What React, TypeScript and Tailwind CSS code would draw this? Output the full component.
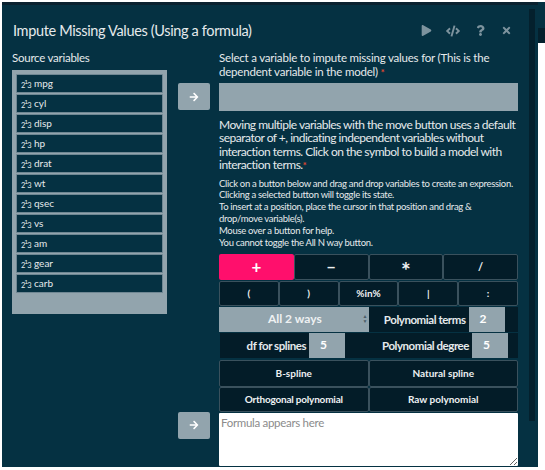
import { FaArrowRight, FaCode, FaPlay, FaQuestion, FaTimes } from "react-icons/fa"

const variables = ["mpg", "cyl", "disp", "hp", "drat", "wt", "qsec", "vs", "am", "gear", "carb"]

const font = { fontFamily: 'Lato, sans-serif' }

function NumericIcon() {
  return (
    <span className="flex h-[12px] w-[11px] shrink-0 items-end text-[7.5px] leading-[8px] text-[#e6eaec]">
      <span>2</span>
      <span className="mb-[4px] ml-[-1px] text-[6.5px]">1</span>
      <span className="ml-[-1px]">3</span>
    </span>
  )
}

function MoveButton() {
  return (
    <button className="flex h-[27px] w-[32px] items-center justify-center rounded-[2px] bg-[#92a4ad] text-white">
      <FaArrowRight className="size-[10px]" />
    </button>
  )
}

function OpButton({ label, className = "" }: { label: string; className?: string }) {
  return (
    <button className={`flex items-center justify-center rounded-[2px] border border-[#3a515d] bg-[#031c28] font-bold leading-none text-[#eef1f2] ${className}`}>
      {label}
    </button>
  )
}

function NumberField({ label, value, labelWidth }: { label: string; value: string; labelWidth: string }) {
  return (
    <div className="flex h-[25px] items-center bg-[#031c28]">
      <span className={`shrink-0 whitespace-nowrap text-right text-[11.5px] font-bold tracking-[-0.45px] text-[#e6eaec] ${labelWidth}`}>{label}</span>
      <span className="ml-[3px] flex h-[25px] w-[36px] items-center bg-[#92a4ad] pl-[11px] text-[12px] font-bold text-white">{value}</span>
    </div>
  )
}

export default function App() {
  return (
    <div className="h-[470px] w-[545px] overflow-hidden bg-white" style={font}>
      <div className="ml-[2px] flex h-[467px] w-[543px] pt-[2px]">
        <div className="flex h-full w-[536px] border-t-[3px] border-[#0b2230] bg-[#053142]">
          <div className="flex w-[526px] shrink-0 flex-col">
            <div className="flex h-[41px] shrink-0 items-center pl-[11px] pr-[16px] pt-[10px]">
              <h1 className="flex-1 whitespace-nowrap text-[14.5px] font-normal tracking-[-0.35px] text-[#e6eaec]">Impute Missing Values (Using a formula)</h1>
              <div className="flex items-center text-[#7d939e]">
                <FaPlay className="size-[11px]" />
                <FaCode className="ml-[14px] size-[14px]" />
                <FaQuestion className="ml-[15px] size-[11px]" />
                <FaTimes className="ml-[15px] size-[11px]" />
              </div>
            </div>

            <div className="flex pl-[10px]">
              <div className="w-[155px] shrink-0 pt-[3px]">
                <div className="text-[11.5px] leading-[17px] tracking-[-0.25px] text-[#e6eaec]">Source variables</div>
                <div className="mt-[4px] flex h-[244px] flex-col gap-[1px] bg-[#92a4ad] p-[4px]">
                  {variables.map((name) => (
                    <div key={name} className="flex h-[19px] items-center gap-[2px] rounded-[1px] border border-[#6f8793] bg-[#053142] pl-[4px] text-[10px] text-[#e6eaec]">
                      <NumericIcon />
                      {name}
                    </div>
                  ))}
                </div>
              </div>

              <div className="ml-[11px] mr-[9px] mt-[37px] flex w-[32px] shrink-0 flex-col justify-between pb-[27px]">
                <MoveButton />
                <MoveButton />
              </div>

              <div className="w-[299px] shrink-0 pt-[5px]">
                <div className="text-[11.5px] leading-[13.5px] tracking-[-0.2px] text-[#e6eaec]">
                  Select a variable to impute missing values for (This is the<br />dependent variable in the model) <span className="text-[9px] font-bold leading-[0] text-[#e8482f]">*</span>
                </div>
                <div className="mt-[5px] h-[28px] bg-[#92a4ad]" />
                <div className="mt-[7px] text-[12px] leading-[13.4px] tracking-[-0.5px] text-[#e6eaec]">
                  Moving multiple variables with the move button uses a default separator of +, indicating independent variables without interaction terms. Click on the symbol to build a model with interaction terms.<span className="text-[9px] font-bold leading-[0] text-[#e8482f]">*</span>
                </div>
                <div className="mt-[6px] text-[9.5px] leading-[11.85px] tracking-[-0.3px] text-[#e6eaec]">
                  <div>Click on a button below and drag and drop variables to create an expression.</div>
                  <div>Clicking a selected button will toggle its state.</div>
                  <div>To insert at a position, place the cursor in that position and drag &amp;<br />drop/move variable(s).</div>
                  <div>Mouse over a button for help.</div>
                  <div>You cannot toggle the All N way button.</div>
                </div>

                <div className="mt-[5px] grid h-[26px] grid-cols-4 grid-rows-[26px]">
                  <button className="flex items-center justify-center rounded-[2px] bg-[#ff0f6c] text-[17px] font-bold leading-none text-white">+</button>
                  <OpButton label="−" className="text-[16px]" />
                  <OpButton label="*" className="pt-[8px] text-[23px]" />
                  <OpButton label="/" className="text-[11px]" />
                </div>
                <div className="mt-[1px] grid h-[25px] grid-cols-5 grid-rows-[25px]">
                  <OpButton label="(" className="text-[10px]" />
                  <OpButton label=")" className="text-[10px]" />
                  <OpButton label="%in%" className="text-[10px]" />
                  <OpButton label="|" className="text-[10px]" />
                  <OpButton label=":" className="text-[10px]" />
                </div>
                <div className="mt-[1px] grid h-[25px] grid-cols-2">
                  <div className="flex items-center bg-[#92a4ad] text-[12px] font-bold text-[#eef1f2]">
                    <span className="flex-1 pl-[8px] text-center">All 2 ways</span>
                    <span className="mr-[1px] flex flex-col text-[5px] leading-[5px] text-[#4a5c66]">
                      <span>▲</span>
                      <span>▼</span>
                    </span>
                  </div>
                  <NumberField label="Polynomial terms" value="2" labelWidth="w-[97px]" />
                </div>
                <div className="mt-[1px] grid h-[25px] grid-cols-2 pl-[1px]">
                  <NumberField label="df for splines" value="5" labelWidth="w-[86px]" />
                  <NumberField label="Polynomial degree" value="5" labelWidth="w-[100px]" />
                </div>
                <div className="mt-[2px] grid h-[27px] grid-cols-2 grid-rows-[27px]">
                  <OpButton label="B-spline" className="text-[10px]" />
                  <OpButton label="Natural spline" className="text-[10px]" />
                </div>
                <div className="grid h-[25px] grid-cols-2 grid-rows-[25px]">
                  <OpButton label="Orthogonal polynomial" className="text-[10px] tracking-[-0.2px]" />
                  <OpButton label="Raw polynomial" className="text-[10px]" />
                </div>
                <textarea
                  placeholder="Formula appears here"
                  className="mt-[1px] block h-[53px] w-full rounded-[1px] bg-white px-[2px] py-[1px] text-[11.5px] leading-[18px] tracking-[-0.3px] text-black outline-none placeholder:text-[#8b8b8b]"
                />
              </div>
            </div>
          </div>
          <div className="ml-[1px] mt-[4px] h-[412px] w-[6px] shrink-0 bg-[#04202d]" />
        </div>
        <div className="w-[7px] shrink-0">
          <div className="h-[26px] bg-[#053142]" />
          <div className="h-[15px] bg-[#04202d]" />
        </div>
      </div>
    </div>
  )
}
